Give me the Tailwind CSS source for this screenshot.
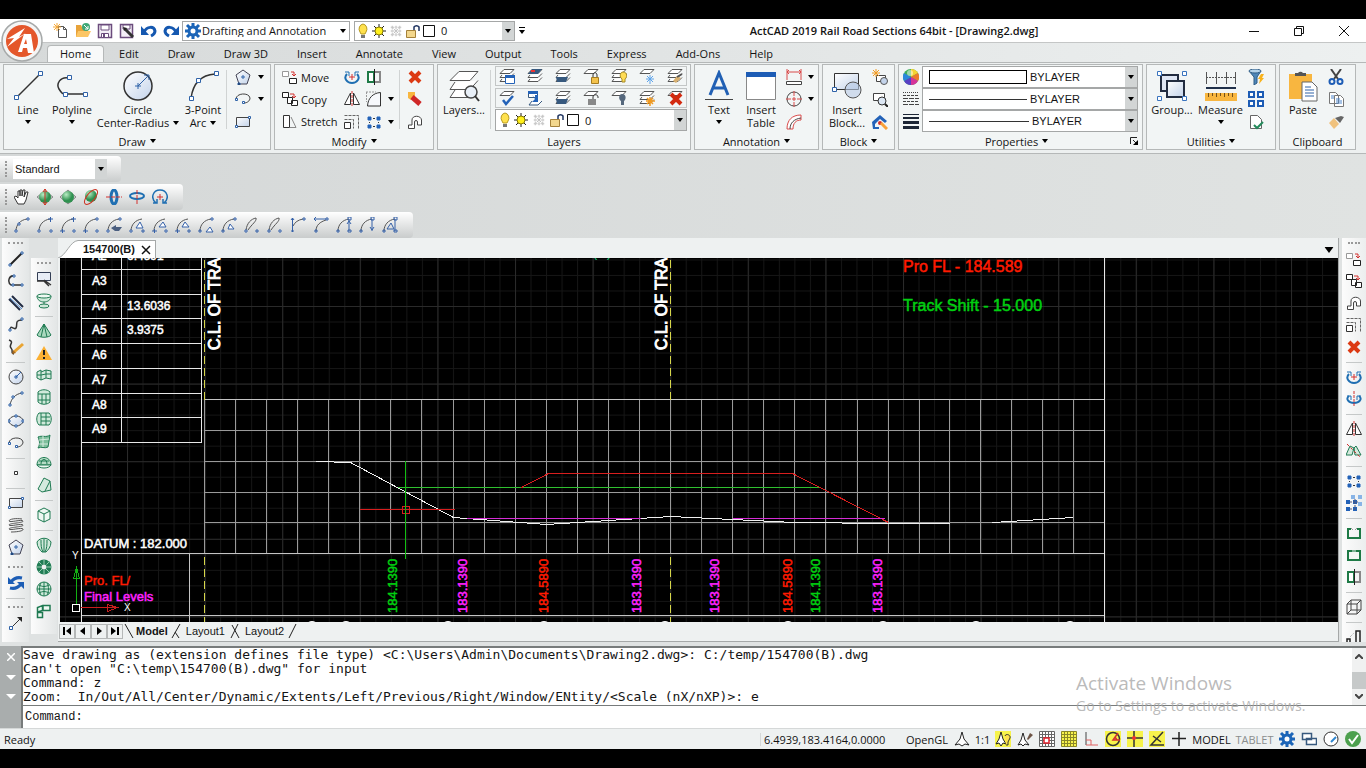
<!DOCTYPE html>
<html lang="en">
<head>
    <meta charset="UTF-8">
    <meta name="viewport" content="width=device-width, initial-scale=1.0">
    <title>ActCAD 2019 Rail Road Sections 64bit - [Drawing2.dwg]</title>
    <script src="https://cdn.jsdelivr.net/npm/@tailwindcss/browser@4"></script>
</head>
<body class="flex h-screen flex-col overflow-hidden bg-black py-[19px] font-['Open_Sans',sans-serif] text-[11px] leading-[13px] text-[#141414]">

    <!-- Icon sprite -->
    <svg class="absolute h-0 w-0" aria-hidden="true">
        <defs>
            <linearGradient id="soft" x2="1" y2="1"><stop stop-color="#fff"/><stop offset="1" stop-color="#c3d3ea"/></linearGradient>
            <radialGradient id="ball" cx=".35" cy=".3"><stop stop-color="#b9ecc3"/><stop offset="1" stop-color="#2f9150"/></radialGradient>
        </defs>
        <!-- title bar -->
        <symbol id="new" viewBox="0 0 16 16"><path d="M5.500 3.500h5l3 3v8h-8z" fill="#fff" stroke="#555"/><path d="M10.500 3.500v3h3" fill="none" stroke="#555"/><path d="M4 0v8M0 4h8M1 1l6 6M7 1L1 7" stroke="#f5a93b"/></symbol>
        <symbol id="open" viewBox="0 0 16 16"><path d="M1 2h5l1 2h6v10H1z" fill="#e8a33a"/><path d="M3 8h13l-3 6H1z" fill="#fcc665"/><circle cx="11" cy="4" r="4" fill="#3fa877"/><path d="M9 2l4 4M13 3v3h-3" stroke="#fff" fill="none"/></symbol>
        <symbol id="save" viewBox="0 0 16 16"><path d="M1.500 1.500h13v13h-13z" fill="#f3eef6" stroke="#6b4c7d" stroke-width="1.500"/><path d="M4 2h8v5H4z" fill="#fff" stroke="#6b4c7d"/><path d="M4.500 10.500h7v4h-7z" fill="#fff" stroke="#6b4c7d"/><path d="M6 11h2v3H6z" fill="#6b4c7d"/></symbol>
        <symbol id="saveas" viewBox="0 0 16 16"><path d="M1.500 1.500h12v13h-12z" fill="#f3eef6" stroke="#6b4c7d" stroke-width="1.500"/><path d="M4 2h7v4H4z" fill="#fff" stroke="#6b4c7d"/><path d="M6 6l8 8" stroke="#333" stroke-width="3"/><path d="M4 4l4 1-3 3z" fill="#222"/></symbol>
        <symbol id="undo" viewBox="0 0 16 16"><path d="M3 9C6 3 13 3 14 8c0 3-2 4-4 5" fill="none" stroke="#1558b0" stroke-width="3"/><path d="M0 3v9h8z" fill="#1558b0"/></symbol>
        <symbol id="redo" viewBox="0 0 16 16"><path d="M13 9C10 3 3 3 2 8c0 3 2 4 4 5" fill="none" stroke="#1558b0" stroke-width="3"/><path d="M16 3v9H8z" fill="#1558b0"/></symbol>
        <symbol id="gear" viewBox="0 0 16 16"><path d="M8 0v16M0 8h16M2 2l12 12M14 2L2 14" stroke="#1c65b8" stroke-width="3"/><circle cx="8" cy="8" r="4" fill="#fff" stroke="#1c65b8" stroke-width="3"/></symbol>
        <symbol id="bulb" viewBox="0 0 16 16"><path d="M8 1a4.500 5 0 0 1 3 8l-1 2H6L5 9a4.500 5 0 0 1 3-8z" fill="#ffe14d" stroke="#b79a20"/><path d="M6 12h4v3H6z" fill="#777"/></symbol>
        <symbol id="sun" viewBox="0 0 16 16"><path d="M8 1v14M1 8h14M3 3l10 10M13 3L3 13" stroke="#222"/><circle cx="8" cy="8" r="4" fill="#fff01c" stroke="#887a00"/></symbol>
        <symbol id="frost" viewBox="0 0 16 16"><path d="M3 1v14M8 1v14M13 1v14M1 3h14M1 8h14M1 13h14M3 3l10 10M13 3L3 13" stroke="#aaa" stroke-dasharray="2 1"/></symbol>
        <symbol id="unlock" viewBox="0 0 16 16"><path d="M9 7V4a3 3 0 0 1 5 0v4" fill="none" stroke="#1f3460" stroke-width="1.500"/><path d="M1.500 7.500h9v7h-9z" fill="#f3d78d" stroke="#a5813a"/></symbol>
        <symbol id="swatch" viewBox="0 0 16 16"><path d="M2.500 2.500h11v11h-11z" fill="#fff" stroke="#111"/></symbol>
        <symbol id="caret" viewBox="0 0 6 4"><path d="M0 0h6L3 4z"/></symbol>
        <!-- large ribbon icons -->
        <symbol id="L-line" viewBox="0 0 32 32"><path d="M4 28L28 4" stroke="#333" stroke-width="1.500"/><path d="M2.500 25.500h4v4h-4zM26.500 1.500h4v4h-4z" fill="#fff" stroke="#2f62a8"/></symbol>
        <symbol id="L-polyline" viewBox="0 0 32 32"><path d="M13 8C4 6 0 14 3 19s4 5 6 5h20" fill="none" stroke="#333" stroke-width="1.500"/><path d="M11.500 5.500h4v4h-4zM7.500 22.500h4v4h-4zM27.500 22.500h4v4h-4z" fill="#fff" stroke="#2f62a8"/></symbol>
        <symbol id="L-circle" viewBox="0 0 32 32"><circle cx="16" cy="16" r="14" fill="url(#soft)" stroke="#333" stroke-width="1.500"/><path d="M16 16l10-10M13 16h6M16 13v6M22 5h5v5" fill="none" stroke="#2f62a8"/></symbol>
        <symbol id="L-arc" viewBox="0 0 32 32"><path d="M4 28C6 14 14 5 28 4" fill="none" stroke="#333" stroke-width="1.500"/><path d="M2.500 26.500h4v4h-4zM9.500 8.500h4v4h-4zM27.500 1.500h4v4h-4z" fill="#fff" stroke="#2f62a8"/></symbol>
        <symbol id="L-layers" viewBox="0 0 32 32"><path d="M11 1.500h19l-8 9H2zM7 12l-5 7.500h20l8-9M7 20l-5 7.500h18l6-7" fill="#fff" stroke="#555"/><circle cx="23" cy="22" r="6" fill="#e9f0f8" stroke="#444" stroke-width="1.500"/><path d="M27 26l4 5" stroke="#333" stroke-width="2"/></symbol>
        <symbol id="L-text" viewBox="0 0 32 32"><path d="M7 25L16 3l9 22M10 18h12" fill="none" stroke="#2160b4" stroke-width="3"/><path d="M2 29.500h28" stroke="#444"/></symbol>
        <symbol id="L-table" viewBox="0 0 32 32"><path d="M1.500 2.500h29v27h-29z" fill="#fff" stroke="#888"/><path d="M1 2h30v5H1z" fill="#1d5cb5"/></symbol>
        <symbol id="L-block" viewBox="0 0 32 32"><path d="M3.500 3.500h24v16h-24z" fill="url(#soft)" stroke="#333"/><path d="M1.500 17.500h4v4h-4z" fill="#fff" stroke="#2f62a8"/><circle cx="22" cy="20" r="8" fill="#b9cce6" fill-opacity=".6" stroke="#555"/></symbol>
        <symbol id="L-group" viewBox="0 0 32 32"><path d="M5 5h17v16H5z" fill="#dfe6f4" stroke="#222c40" stroke-width="2"/><path d="M11 11h17v16H11z" fill="url(#soft)" stroke="#222c40" stroke-width="2"/><path d="M1.500 1.500h4v4h-4zM26.500 1.500h4v4h-4zM1.500 26.500h4v4h-4zM26.500 26.500h4v4h-4z" fill="#fff" stroke="#3973be"/></symbol>
        <symbol id="L-measure" viewBox="0 0 32 32"><path d="M1.500 2v12M11.500 2v12M21.500 2v12M30.500 2v12" stroke="#555"/><path d="M1 7.500h30" stroke="#555" stroke-dasharray="2 1"/><path d="M1 18h30" stroke="#20304a" stroke-width="2"/><path d="M0 23h32v8H0z" fill="#f8b640"/><path d="M3.500 23v4M7.500 23v3M11.500 23v4M15.500 23v3M19.500 23v4M23.500 23v3M27.500 23v4" stroke="#73501a"/></symbol>
        <symbol id="L-paste" viewBox="0 0 32 32"><path d="M2 4h23v25H2z" fill="#f8b640"/><path d="M8 6V3h3a3 3 0 0 1 5 0h3v3z" fill="#555"/><path d="M15 12h10l5 5v14H15z" fill="#fff" stroke="#666"/><path d="M18 17h6M18 20h9M18 23h9M18 26h9" stroke="#2f62a8"/></symbol>
        <!-- draw -->
        <symbol id="line" viewBox="0 0 16 16"><path d="M2 14L14 2" stroke="#222" stroke-width="2"/><path d="M1 13h2v2H1zM13 1h2v2h-2z" fill="#fff" stroke="#2f62a8"/></symbol>
        <symbol id="polyline" viewBox="0 0 16 16"><path d="M6 3C1 2-1 9 3 12h11" fill="none" stroke="#333" stroke-width="1.500"/><path d="M5 2h2v2H5zM4 11h2v2H4zM13 11h2v2h-2z" fill="#fff" stroke="#2f62a8"/></symbol>
        <symbol id="parallel" viewBox="0 0 16 16"><path d="M1 4l11 11M4 1l11 11" stroke="#222c44" stroke-width="2"/><path d="M2 3l12 11" stroke="#4d86cc"/></symbol>
        <symbol id="spline" viewBox="0 0 16 16"><path d="M2 14c0-8 4 0 6-3S6 3 14 3" fill="none" stroke="#333" stroke-width="1.500"/><path d="M1 12h2v2H1zM13 1h2v2h-2z" fill="#fff" stroke="#2f62a8"/></symbol>
        <symbol id="sketch" viewBox="0 0 16 16"><path d="M1 1c6 2-1 5 2 8s-1 5 3 6" fill="none" stroke="#333" stroke-width="1.500"/><path d="M6 13l9-8" stroke="#e9a534" stroke-width="3"/><path d="M4 15l1-4 3 3z" fill="#a96b20"/></symbol>
        <symbol id="circle" viewBox="0 0 16 16"><circle cx="8" cy="8" r="7" fill="url(#soft)" stroke="#444"/><path d="M8 8l5-5M6 8h4M8 6v4" stroke="#2f62a8"/></symbol>
        <symbol id="arc" viewBox="0 0 16 16"><path d="M2 14C3 8 7 3 14 2" fill="none" stroke="#444"/><path d="M1 13h2v2H1zM4 5h2v2H4zM13 1h2v2h-2z" fill="#fff" stroke="#2f62a8"/></symbol>
        <symbol id="ellipse" viewBox="0 0 16 16"><ellipse cx="8" cy="8" rx="7" ry="5" fill="url(#soft)" stroke="#444"/><path d="M0 7h2v2H0zM14 7h2v2h-2zM7 2h2v2H7zM7 12h2v2H7z" fill="#fff" stroke="#2f62a8"/></symbol>
        <symbol id="earc" viewBox="0 0 16 16"><path d="M1 8c0-6 13-7 14-1 0 3-3 5-6 5" fill="none" stroke="#444"/><path d="M.5 7.500h2v2h-2zM7.500 10.500h2v2h-2z" fill="#fff" stroke="#2f62a8"/></symbol>
        <symbol id="point" viewBox="0 0 16 16"><path d="M6.500 6.500h3v3h-3z" fill="#fff" stroke="#333"/></symbol>
        <symbol id="rect" viewBox="0 0 16 16"><path d="M1.500 3.500h13v9h-13z" fill="url(#soft)" stroke="#444"/><path d="M.5 11.500h2v2h-2zM13.500 2.500h2v2h-2z" fill="#fff" stroke="#2f62a8"/></symbol>
        <symbol id="hatch" viewBox="0 0 16 16"><path d="M14 2C8 1 1 2 1 4s13-2 14 0S1 6 1 8s13-2 14 0-14 2-14 4 13-2 14 0-6 3-12 3" fill="none" stroke="#555"/></symbol>
        <symbol id="polygon" viewBox="0 0 16 16"><path d="M8 1l7 5-3 9H4L1 6z" fill="url(#soft)" stroke="#445"/><path d="M6 8h4M8 6v4M3 14h2v2H3z" stroke="#2f62a8"/></symbol>
        <symbol id="refresh" viewBox="0 0 16 16"><path d="M14 3C10 2 6 3 3 7M2 13c4 1 8 0 11-4" fill="none" stroke="#1c5db5" stroke-width="3"/><path d="M0 2v7h7zM16 14V7H9z" fill="#1c5db5"/></symbol>
        <symbol id="ray" viewBox="0 0 16 16"><path d="M3 13L13 3" stroke="#333"/><path d="M9 2h5v5z" fill="#222"/><path d="M1.500 11.500h3v3h-3z" fill="#fff" stroke="#2f62a8"/></symbol>
        <!-- 3D surfaces -->
        <symbol id="redraw" viewBox="0 0 16 16"><path d="M1.500 1.500h13v8h-13z" fill="#e8edf6" stroke="#333e55"/><path d="M1 10h7l5 5M8 9l7 5" fill="none" stroke="#333" stroke-width="1.500"/></symbol>
        <symbol id="revolve" viewBox="0 0 16 16"><path d="M1 3c0 8 14 8 14 0M8 9v4" fill="#cfe9da" stroke="#1f7a52"/><ellipse cx="8" cy="3" rx="7" ry="2" fill="#eef8f2" stroke="#1f7a52"/><ellipse cx="8" cy="13" rx="5" ry="2" fill="#cfe9da" stroke="#1f7a52"/></symbol>
        <symbol id="cone" viewBox="0 0 16 16"><path d="M8 1L1 12c2 3 12 3 14 0z" fill="#a9d8be" stroke="#1f7a52"/><path d="M8 1L5 14M8 1l3 13" stroke="#1f7a52"/></symbol>
        <symbol id="warn" viewBox="0 0 16 16"><path d="M8 1l8 14H0z" fill="#fbb033"/><path d="M8 5v5M8 12v2" stroke="#222" stroke-width="2"/></symbol>
        <symbol id="mesh1" viewBox="0 0 16 16"><path d="M1 5l4-2v10l-4-2zM5 5l5-2 5 1v8l-5-1-5 2M1 8h4l5-1h5M10 3v8" fill="#d5eade" stroke="#1f7a52"/></symbol>
        <symbol id="mesh2" viewBox="0 0 16 16"><path d="M2 3c3-3 9-3 12 0v10c-3 3-9 3-12 0z" fill="#cfe9da" stroke="#1f7a52"/><path d="M2 5h12M2 11h12M6 5v10M10 5v10" stroke="#1f7a52"/></symbol>
        <symbol id="mesh3" viewBox="0 0 16 16"><path d="M3 2h10c3 3 3 9 0 12H3C0 11 0 5 3 2z" fill="#cfe9da" stroke="#1f7a52"/><path d="M5 2v12M10 2v12M5 6h9M5 10h9" stroke="#1f7a52"/></symbol>
        <symbol id="mesh4" viewBox="0 0 16 16"><path d="M2 4c4-2 8 1 12-2l-2 12c-4 2-6-1-10 1 2-4 2-6 0-11z" fill="#7fbf9d" stroke="#1f7a52"/><path d="M3 7l10-1M3 11h9M7 3v11" stroke="#d5eade"/></symbol>
        <symbol id="dome" viewBox="0 0 16 16"><path d="M1 10C1 0 15 0 15 10z" fill="#b5dcc6" stroke="#1f7a52"/><path d="M1 10c2 4 12 4 14 0z" fill="#eef8f2" stroke="#1f7a52"/><path d="M5 9c0-6 6-6 6 0M3 6h10" fill="none" stroke="#1f7a52"/></symbol>
        <symbol id="face" viewBox="0 0 16 16"><path d="M2 12L8 1l6 3 1 9-9 2z" fill="#d5eade" stroke="#1f7a52"/><path d="M14 4l-5 10" fill="none" stroke="#1f7a52"/></symbol>
        <symbol id="box" viewBox="0 0 16 16"><path d="M8 1l6 3v8l-6 3-6-3V4z" fill="#eef8f2" stroke="#1f7a52"/><path d="M2 4l6 3 6-3M8 7v8" fill="none" stroke="#1f7a52"/></symbol>
        <symbol id="shell" viewBox="0 0 16 16"><path d="M1 5c3-5 11-5 14 0 0 5-3 8-5 10H6C4 13 1 10 1 5z" fill="#cfe9da" stroke="#1f7a52"/><path d="M5 3c0 5 0 8 2 12M11 3c0 5 0 8-2 12M8 2v13" stroke="#1f7a52" fill="none"/></symbol>
        <symbol id="torus" viewBox="0 0 16 16"><circle cx="8" cy="8" r="5" fill="none" stroke="#217d55" stroke-width="5"/><path d="M8 0v16M0 8h16M2 2l12 12M14 2L2 14" stroke="#9ccfb4" stroke-dasharray="5 6"/></symbol>
        <symbol id="globe" viewBox="0 0 16 16"><circle cx="8" cy="8" r="7" fill="#cfe9da" stroke="#1f7a52"/><path d="M1 8h14M8 1v14M3 4c4 2 6 2 10 0M3 12c4-2 6-2 10 0M5 2c-2 4-2 8 0 12M11 2c2 4 2 8 0 12" fill="none" stroke="#1f7a52"/></symbol>
        <symbol id="tiles" viewBox="0 0 16 16"><path d="M1.500 9.500h5v5h-5zM1.500 9V4.500l5-2v5zM7 2.500h7v5H7z" fill="#eef8f2" stroke="#1f7a52" stroke-width="1.500"/></symbol>
        <!-- modify -->
        <symbol id="move" viewBox="0 0 16 16"><path d="M.5 2.500h6v5h-6z" fill="#fff" stroke="#999"/><path d="M7.500 9.500h7v5h-7z" fill="#fff" stroke="#222"/><path d="M9 3h3v4M10 5l2 2 2-2" fill="none" stroke="#d3302f"/></symbol>
        <symbol id="copy" viewBox="0 0 16 16"><path d="M.5 1.500h6v5h-6zM5.500 6.500h5v6h-5zM9.500 9.500h6v5h-6z" fill="#fff" stroke="#222"/><path d="M8 3h4v4M10 5l2 2 2-2" fill="none" stroke="#d3302f"/></symbol>
        <symbol id="stretch" viewBox="0 0 16 16"><path d="M1.500 2.500h6v12h-6z" fill="#fff" stroke="#333"/><path d="M9 4l5 10.500H8" fill="none" stroke="#888"/></symbol>
        <symbol id="rotate" viewBox="0 0 16 16"><path d="M3 5C-1 9 3 14 8 14s9-5 5-9" fill="none" stroke="#1f6fb2" stroke-width="2"/><path d="M1 3h4v4M15 3h-4v4" fill="none" stroke="#1f6fb2"/><path d="M5 8h6M8 5v6" stroke="#d3302f"/></symbol>
        <symbol id="rotate3" viewBox="0 0 16 16"><path d="M3 5c-4 3 0 7 5 7s9-4 5-7" fill="none" stroke="#1f6fb2" stroke-width="2"/><path d="M1 5h4v4M15 5h-4v4" fill="none" stroke="#1f6fb2"/><path d="M8 0v16" stroke="#d3302f" stroke-dasharray="3 1"/></symbol>
        <symbol id="trim" viewBox="0 0 16 16"><path d="M2 3h6v10H2z" fill="#fff" stroke="#1e7a46" stroke-width="2"/><path d="M9 3h5v10H9" fill="none" stroke="#888" stroke-width="2"/><path d="M8.500 0v16" stroke="#222"/></symbol>
        <symbol id="mirror" viewBox="0 0 16 16"><path d="M6.500 2v11.500h-6zM9.500 2v11.500h6z" fill="#fff" stroke="#333"/><path d="M8 0v16" stroke="#d3302f" stroke-dasharray="3 1"/></symbol>
        <symbol id="mirror3" viewBox="0 0 16 16"><path d="M4 3l-4 9h6l2-7zM10 3l5 9H9L8 5z" fill="#d5eade" stroke="#1f7a52"/><path d="M1 1l13 13" stroke="#d3302f" stroke-dasharray="3 2"/></symbol>
        <symbol id="fillet" viewBox="0 0 16 16"><path d="M1.500 15C2 7 7 2 14.500 1.500V15z" fill="#f7f9fc" stroke="#333"/><path d="M0 1h10M.5 1v10" stroke="#999" stroke-dasharray="2 1"/></symbol>
        <symbol id="scale" viewBox="0 0 16 16"><path d="M.5 8.500h6v6h-6z" fill="#fff" stroke="#333"/><path d="M.5 5.500h9v9M.5 1.500h14v13" fill="none" stroke="#666" stroke-dasharray="3 1"/></symbol>
        <symbol id="array" viewBox="0 0 16 16"><path d="M2 3h3v3H2zM11 3h3v3h-3zM2 11h3v3H2zM11 11h3v3h-3z" fill="#2362b8" stroke="#2362b8"/><path d="M7 4.500h2M7 12.500h2M3.500 8v1M12.500 8v1" stroke="#333"/></symbol>
        <symbol id="array3" viewBox="0 0 16 16"><path d="M5 0h4v4H5zM12 0h4v4h-4zM12 7h4v4h-4z" fill="#88b4e6"/><path d="M0 5h4v4H0zM7 5h4v4H7zM0 12h4v4H0zM7 12h4v4H7z" fill="#2362b8"/><path d="M4 7h8M4 14h3M9 4v12" stroke="#557" stroke-dasharray="2 1"/></symbol>
        <symbol id="erase" viewBox="0 0 16 16"><path d="M3 3l10 10M13 3L3 13" stroke="#dc3912" stroke-width="4"/></symbol>
        <symbol id="explode" viewBox="0 0 16 16"><path d="M1 1h7v4L4 9 1 7z" fill="#f8b640"/><path d="M5 6l8 7" stroke="#cf2727" stroke-width="5"/></symbol>
        <symbol id="offset" viewBox="0 0 16 16"><path d="M1.500 14.500h6V8a1.500 1.500 0 0 1 3 0v3h4V6C14 1 5 1 5 6v5H1.500z" fill="#fff" stroke="#444"/></symbol>
        <symbol id="break" viewBox="0 0 16 16"><path d="M5 4H2v9h12V4h-3" fill="none" stroke="#1e7a46" stroke-width="2"/><path d="M5 3l2 2M11 3L9 5" stroke="#999"/></symbol>
        <symbol id="join" viewBox="0 0 16 16"><path d="M2 4h12v9H2z" fill="#f3f8f5" stroke="#1e7a46" stroke-width="2"/><path d="M6 4h4" stroke="#7fb596" stroke-width="2"/></symbol>
        <symbol id="wire" viewBox="0 0 16 16"><path d="M1 5h10v10H1zM5 1h10v10H5zM1 5l4-4M11 5l4-4M11 15l4-4M1 15l4-4" fill="none" stroke="#444"/></symbol>
        <symbol id="align" viewBox="0 0 16 16"><path d="M1 14v-4h3v4M10 14V2h4v12" fill="none" stroke="#222" stroke-width="1.500"/><path d="M4 8l4-4" stroke="#999" stroke-dasharray="1 1"/></symbol>
        <!-- layer tools -->
        <symbol id="stack" viewBox="0 0 16 16"><path d="M5 1.500h10l-4 4H1zM3 7l-2 2.500h10l4-4M3 11l-2 2.500h10l4-4" fill="#fff" stroke="#555"/></symbol>
        <symbol id="ly1" viewBox="0 0 16 16"><use href="#stack"/><path d="M6.500 7.500h9v8h-9z" fill="#fff" stroke="#2362b8"/><path d="M6 7h10v3H6z" fill="#2362b8"/></symbol>
        <symbol id="ly2" viewBox="0 0 16 16"><use href="#stack"/><path d="M5 1h10l-4 5H1z" fill="#37597e"/><path d="M4 3h4" stroke="#e33" stroke-width="2"/></symbol>
        <symbol id="ly3" viewBox="0 0 16 16"><use href="#stack"/><path d="M1 9h12l-2 5H2z" fill="#37597e"/></symbol>
        <symbol id="ly4" viewBox="0 0 16 16"><path d="M5 1.500h10l-4 4H1z" fill="#fff" stroke="#555"/><path d="M10 9V7c0-3 4-3 4 0v2" fill="none" stroke="#333"/><path d="M8.500 9.500h7v6h-7z" fill="#f3c24c" stroke="#a57c20"/></symbol>
        <symbol id="ly5" viewBox="0 0 16 16"><use href="#stack"/><path d="M12 4c5 0 4 6 2 7v3h-3v-3C8 9 9 4 12 4z" fill="#ffdc55" stroke="#a58a26"/></symbol>
        <symbol id="ly6" viewBox="0 0 16 16"><path d="M5 1.500h10l-4 4H1z" fill="#fff" stroke="#555"/><path d="M11 7v9M7 11h8M8 8l6 6M14 8l-6 6" stroke="#5fa4ea"/></symbol>
        <symbol id="ly7" viewBox="0 0 16 16"><use href="#stack"/><path d="M6 13l4-5 4 2-5 5z" fill="#d8b070"/><path d="M10 9l5-3" stroke="#555" stroke-width="2"/></symbol>
        <symbol id="ly8" viewBox="0 0 16 16"><path d="M5 1.500h10l-4 4H1z" fill="#fff" stroke="#555"/><path d="M4 10l3 4 7-8" fill="none" stroke="#2362b8" stroke-width="2.500"/></symbol>
        <symbol id="ly9" viewBox="0 0 16 16"><path d="M1.500 1.500h9v6h-9zM5 11l-3 4h9l4-4" fill="#fff" stroke="#37597e"/><path d="M1 1h10v3H1zM5 5l3 3v-3h3v7H5l3-3z" fill="#2362b8"/></symbol>
        <symbol id="ly11" viewBox="0 0 16 16"><path d="M5 1.500h10l-4 4H1z" fill="#fff" stroke="#555"/><path d="M10 9V7c0-3 5-3 5 0v1" fill="none" stroke="#333"/><path d="M5 9h8v6H5z" fill="#888"/></symbol>
        <symbol id="ly12" viewBox="0 0 16 16"><path d="M5 1.500h10l-4 4H1z" fill="#fff" stroke="#555"/><path d="M11 4c5 0 4 6 2 7v4h-3v-4C7 9 8 4 11 4z" fill="#56687d"/></symbol>
        <symbol id="ly13" viewBox="0 0 16 16"><use href="#stack"/><path d="M11 7v9M7 11h9M8 8l6 6M14 8l-6 6" stroke="#f29a1f" stroke-width="1.500"/></symbol>
        <symbol id="ly14" viewBox="0 0 16 16"><path d="M5 1.500h10l-4 4H1z" fill="#fff" stroke="#555"/><path d="M4 4l10 10M14 4L4 14" stroke="#d32a10" stroke-width="4"/></symbol>
        <!-- annotation, block, properties, utilities, clipboard -->
        <symbol id="dim" viewBox="0 0 16 16"><path d="M1 0v11M15 0v11M1 3h14M3 1L1 3l2 2M13 1l2 2-2 2" fill="none" stroke="#d94a4a"/><path d="M.5 12.500h15v3H.5z" fill="#fff" stroke="#444"/></symbol>
        <symbol id="center" viewBox="0 0 16 16"><circle cx="8" cy="8" r="7" fill="none" stroke="#444"/><path d="M8 0v5M8 11v5M0 8h5M11 8h5M6 8h4M8 6v4" stroke="#d94a4a"/></symbol>
        <symbol id="dimarc" viewBox="0 0 16 16"><path d="M1 15C1 6 6 1 15 1v5c-5 0-8 3-8 9z" fill="#fff" stroke="#d94a4a"/><path d="M4 15C4 9 8 5 15 4" fill="none" stroke="#444"/></symbol>
        <symbol id="bnew" viewBox="0 0 16 16"><path d="M4.500 6.500h9v6h-9z" fill="#fff" stroke="#444"/><circle cx="12" cy="12" r="3.500" fill="#c3d3ea" stroke="#555"/><path d="M4 0v8M0 4h8M1 1l6 6M7 1L1 7" stroke="#f29a1f"/></symbol>
        <symbol id="bfind" viewBox="0 0 16 16"><path d="M1.500 2.500h11v7h-11z" fill="#fff" stroke="#444"/><circle cx="10" cy="10" r="4" fill="#dce7f4" stroke="#333"/><path d="M13 13l3 3" stroke="#222" stroke-width="2"/></symbol>
        <symbol id="bedit" viewBox="0 0 16 16"><path d="M0 8l8-7 7 6-2 2-5-4-5 5v3h4v2H1z" fill="#2362b8"/><circle cx="8" cy="9" r="2" fill="#d3302f"/><path d="M9 9l6 6" stroke="#f8a13a" stroke-width="3"/></symbol>
        <symbol id="wheel" viewBox="0 0 16 16"><circle cx="8" cy="8" r="8" fill="#3fae5a"/><path d="M8 8V0a8 8 0 0 1 7 4z" fill="#f6d331"/><path d="M8 8l7-4a8 8 0 0 1 0 8z" fill="#ee7a2b"/><path d="M8 8l7 4a8 8 0 0 1-7 4z" fill="#d6339a"/><path d="M8 8v8a8 8 0 0 1-7-4z" fill="#5840c4"/><path d="M8 8l-7 4a8 8 0 0 1 0-8z" fill="#2b87db"/><circle cx="7" cy="4" r="3" fill="#fff" fill-opacity=".5"/></symbol>
        <symbol id="ltype" viewBox="0 0 16 16"><path d="M0 1.500h16" stroke="#444" stroke-dasharray="1 1"/><path d="M0 4.500h16M0 10.500h16" stroke="#444" stroke-dasharray="3 1"/><path d="M0 7.500h16M0 13.500h16" stroke="#444" stroke-dasharray="5 1"/></symbol>
        <symbol id="lweight" viewBox="0 0 16 16"><path d="M0 .5h16" stroke="#1d2636"/><path d="M0 4h16" stroke="#1d2636" stroke-width="2"/><path d="M0 8.500h16M0 13.500h16" stroke="#1d2636" stroke-width="3"/></symbol>
        <symbol id="filter" viewBox="0 0 16 16"><path d="M1 2h12L9 8v6l-3 2V8z" fill="#4e86b8" stroke="#2f5c86"/><ellipse cx="7" cy="2" rx="6" ry="2" fill="#b5d3ea" stroke="#2f5c86"/><path d="M13 5l-3 5h2l-1 5 5-6h-2l2-4z" fill="#f8b21c"/></symbol>
        <symbol id="quad" viewBox="0 0 16 16"><path d="M1 1h5v5H1zM10 1h5v5h-5zM1 10h5v5H1zM10 10h5v5h-5z" fill="#fff" stroke="#1d5cb5" stroke-width="2"/></symbol>
        <symbol id="audit" viewBox="0 0 16 16"><path d="M2.500 1.500h7l4 4v9h-11z" fill="#fff" stroke="#666"/><path d="M6 11l3 3 6-6" fill="none" stroke="#238a5b" stroke-width="2"/></symbol>
        <symbol id="cut" viewBox="0 0 16 16"><path d="M3 0l7 10M13 0L6 10" stroke="#444" stroke-width="2"/><circle cx="4" cy="12.500" r="2.500" fill="none" stroke="#1d5cb5" stroke-width="2"/><circle cx="12" cy="12.500" r="2.500" fill="none" stroke="#1d5cb5" stroke-width="2"/></symbol>
        <symbol id="pages" viewBox="0 0 16 16"><path d="M1.500 1.500h6l3 3v8h-9zM6.500 4.500h6l3 3v8h-9z" fill="#fff" stroke="#777"/><path d="M3 5h3M3 7h3M8 8h4M8 10h6M8 12h6" stroke="#4d86cc"/></symbol>
        <symbol id="brush" viewBox="0 0 16 16"><path d="M1 9l5-5 5 6-5 5z" fill="#f0c27e"/><path d="M7 4l5 5 4-6-3-1z" fill="#666"/></symbol>
        <!-- orbit bar -->
        <symbol id="pan" viewBox="0 0 16 16"><path d="M4 15L0 8l2-1 2 2V2h2v5V1h2v6l1-6h2l-1 7 2-5h2l-2 8-2 4z" fill="#fff" stroke="#333"/></symbol>
        <symbol id="orb1" viewBox="0 0 16 16"><path d="M0 8l8-6 8 6-8 6z" fill="#ccc" stroke="#888"/><circle cx="8" cy="8" r="6" fill="url(#ball)"/><path d="M8 0v16M6 3l2-3 2 3M6 13l2 3 2-3" stroke="#cc3322" fill="none"/></symbol>
        <symbol id="orb2" viewBox="0 0 16 16"><path d="M0 8l8-7 8 7-8 7z" fill="#ccc" stroke="#888"/><circle cx="8" cy="8" r="6" fill="url(#ball)"/></symbol>
        <symbol id="orb3" viewBox="0 0 16 16"><circle cx="8" cy="7" r="6" fill="url(#ball)"/><ellipse cx="8" cy="8" rx="9" ry="4" transform="rotate(-50 8 8)" fill="none" stroke="#cc3322"/></symbol>
        <symbol id="orb4" viewBox="0 0 16 16"><ellipse cx="8" cy="8" rx="3" ry="7" fill="none" stroke="#1f6fb2" stroke-width="3"/><path d="M0 8h16" stroke="#d3302f" stroke-dasharray="4 1"/></symbol>
        <symbol id="orb5" viewBox="0 0 16 16"><ellipse cx="8" cy="7" rx="7" ry="3" fill="none" stroke="#1f6fb2" stroke-width="2"/><path d="M8 1v15" stroke="#d3302f" stroke-dasharray="4 1"/></symbol>
        <symbol id="orb6" viewBox="0 0 16 16"><path d="M4 14C-2 9 1 1 8 1s10 8 4 13M1 14h4v-4M15 14h-4v-4" fill="none" stroke="#1f6fb2" stroke-width="1.500"/><path d="M5 8h6M8 5v6" stroke="#d3302f"/></symbol>
        <!-- arc bar -->
        <symbol id="cv" viewBox="0 0 16 16"><path d="M2 14C2 8 6 3 13 2" fill="none" stroke="#555"/></symbol>
        <symbol id="a1" viewBox="0 0 16 16"><use href="#cv"/><path d="M1 13h2v2H1zM4 6h2v2H4zM13 1h2v2h-2z" fill="#fff" stroke="#3460a8"/></symbol>
        <symbol id="a2" viewBox="0 0 16 16"><use href="#cv"/><path d="M1 13h2v2H1zM13 13h2v2h-2zM11 2h5M13.500 0v5" fill="#fff" stroke="#3460a8"/></symbol>
        <symbol id="a3" viewBox="0 0 16 16"><use href="#cv"/><path d="M0 14h5M2.500 12v4M13 13h2v2h-2zM11 2h5M13.500 0v5" fill="#fff" stroke="#3460a8"/></symbol>
        <symbol id="a4" viewBox="0 0 16 16"><use href="#cv"/><path d="M0 14h5M2.500 12v4M13 13h2v2h-2zM13 1h2v2h-2z" fill="#fff" stroke="#3460a8"/></symbol>
        <symbol id="a5" viewBox="0 0 16 16"><use href="#cv"/><path d="M1 13h2v2H1zM13 1h2v2h-2z" fill="#fff" stroke="#3460a8"/><path d="M5 11l5-3v2h6l-3 4H9z" fill="#4b5f80"/></symbol>
        <symbol id="a6" viewBox="0 0 16 16"><use href="#cv"/><path d="M11 5l3 6H7zM1 13h2v2H1zM12 14h4M14 12v4" fill="#fff" stroke="#3460a8"/></symbol>
        <symbol id="a7" viewBox="0 0 16 16"><use href="#cv"/><path d="M11 5l3 5H7zM0 14h5M2.500 12v4M13 13h2v2h-2z" fill="#fff" stroke="#3460a8"/></symbol>
        <symbol id="a8" viewBox="0 0 16 16"><use href="#cv"/><path d="M10 5l4 5H7zM0 14h5M2.500 12v4M12 14h4M14 12v4" fill="#fff" stroke="#3460a8"/></symbol>
        <symbol id="a9" viewBox="0 0 16 16"><use href="#cv"/><path d="M12 10l3 5H8zM0 14h4M2 12v4M13 1h2v2h-2z" fill="#fff" stroke="#3460a8"/></symbol>
        <symbol id="a10" viewBox="0 0 16 16"><use href="#cv"/><path d="M9 7l4 5H7zM0 14h4M2 12v4M13 1h2v2h-2z" fill="#fff" stroke="#3460a8"/></symbol>
        <symbol id="a11" viewBox="0 0 16 16"><path d="M2 13C3 6 7 2 12 1c1 3-4 6-8 12" fill="none" stroke="#555"/><path d="M1 13h2v2H1zM11 14h4M13 12v4" fill="#fff" stroke="#3460a8"/></symbol>
        <symbol id="a12" viewBox="0 0 16 16"><path d="M2 13C3 6 7 2 12 1c1 3-4 6-8 12" fill="none" stroke="#555"/><path d="M0 14h4M2 12v4M12 13h2v2h-2z" fill="#fff" stroke="#3460a8"/></symbol>
        <symbol id="a13" viewBox="0 0 16 16"><path d="M3 9c2-4 5-6 10-7" fill="none" stroke="#555"/><path d="M2.500 1v14M1 3l1.500-2L4 3M1 14h3M13 1h2v2h-2z" fill="none" stroke="#3460a8"/></symbol>
        <symbol id="a14" viewBox="0 0 16 16"><path d="M3 14c0-6 4-9 10-11" fill="none" stroke="#555"/><path d="M1 2h12M3 0L1 2l2 2M13 1h2v2h-2zM1 14h4M3 12v4" fill="none" stroke="#3460a8"/></symbol>
        <symbol id="a15" viewBox="0 0 16 16"><use href="#cv"/><path d="M13 2v12M11 7l2-3 2 3M12 0h3v3h-3zM12 13h3v2h-3zM0 14h4M2 12v4" fill="none" stroke="#3460a8"/></symbol>
        <symbol id="a16" viewBox="0 0 16 16"><use href="#cv"/><path d="M13 2v12M11 10l2 3 2-3M12 0h3v3h-3zM0 14h4M2 12v4" fill="none" stroke="#3460a8"/></symbol>
        <symbol id="a17" viewBox="0 0 16 16"><use href="#cv"/><path d="M13 2v12M12 0h3v3h-3zM12 13h3v2h-3zM9 6l3 6H5zM0 14h4M2 12v4" fill="none" stroke="#3460a8"/></symbol>
        <!-- status bar -->
        <symbol id="ship" viewBox="0 0 16 16"><path d="M8 1l2 7 5 6-4-1-3 2-3-2-4 1 5-6z" fill="#fff" stroke="#222"/></symbol>
        <symbol id="ship2" viewBox="0 0 16 16"><path d="M0 0h16v16H0z" fill="#f7f34c"/><path d="M6 1l2 7 3 5-3-1-2 3-2-3-3 1 3-5z" fill="#fff" stroke="#222"/><path d="M10 5c1-3 6-1 5 2l-2 4v3h-2" fill="#ffe14d" stroke="#333"/></symbol>
        <symbol id="ship3" viewBox="0 0 16 16"><path d="M6 2l2 7 4 5-4-1-2 2-2-2-3 1 3-5z" fill="#fff" stroke="#222"/><path d="M10 8l3-6 3 2-5 5z" fill="#6d5446"/></symbol>
        <symbol id="snap" viewBox="0 0 16 16"><path d="M.5.5h15v15H.5zM.5 3.500h15M.5 6.500h15M.5 9.500h15M.5 12.500h15M3.500 0v16M6.500 0v16M9.500 0v16M12.500 0v16" fill="#fff" stroke="#666"/><path d="M5 7h5v5H5z" fill="#fff" stroke="#e0202b" stroke-width="1.500"/></symbol>
        <symbol id="grid" viewBox="0 0 16 16"><path d="M.5.5h15v15H.5zM.5 3.500h15M.5 6.500h15M.5 9.500h15M.5 12.500h15M3.500 0v16M6.500 0v16M9.500 0v16M12.500 0v16" fill="#f7f34c" stroke="#8a8728"/></symbol>
        <symbol id="ortho" viewBox="0 0 16 16"><path d="M3 1v13" stroke="#444"/><path d="M3 14h12M3 9h5v5" fill="none" stroke="#e06060"/></symbol>
        <symbol id="polar" viewBox="0 0 16 16"><path d="M0 0h16v16H0z" fill="#f7f34c"/><circle cx="8" cy="8" r="6.500" fill="none" stroke="#333" stroke-width="1.500"/><path d="M13 2L8 9h7M10 6l2 3" fill="none" stroke="#d3302f" stroke-width="1.500"/></symbol>
        <symbol id="osnap" viewBox="0 0 16 16"><path d="M0 0h16v16H0z" fill="#f7f34c"/><path d="M7 0v16M0 7h16" stroke="#333" stroke-width="1.500"/><circle cx="7" cy="7" r="2" fill="#e33"/></symbol>
        <symbol id="otrack" viewBox="0 0 16 16"><path d="M0 0h16v16H0z" fill="#f7f34c"/><path d="M14 1L2 14h13M4 5l8 6" fill="none" stroke="#333" stroke-width="1.500"/></symbol>
        <symbol id="cross" viewBox="0 0 16 16"><path d="M8 1v14M1 7.500h14" stroke="#222" stroke-width="1.500"/></symbol>
        <symbol id="wins" viewBox="0 0 16 16"><path d="M1.500 2.500h9v6h-9zM5.500 7.500h10v6h-10z" fill="#fff" stroke="#37597e" stroke-width="1.500"/></symbol>
        <symbol id="clock" viewBox="0 0 16 16"><circle cx="8" cy="8" r="7" fill="#fff" stroke="#333"/><path d="M8 11l5-5" stroke="#2f87d0" stroke-width="2"/></symbol>
        <symbol id="ok" viewBox="0 0 16 16"><circle cx="8" cy="8" r="8" fill="#4ca04e"/><path d="M4 8l3 4 6-8" fill="none" stroke="#fff" stroke-width="2"/></symbol>
    </svg>

    <!-- Title bar -->
    <header class="relative flex h-6 shrink-0 items-center border-b border-[#c4c6c6] bg-white pl-[50px]">
        <svg class="absolute top-0 left-0 z-10 h-11 w-11" viewBox="0 0 44 44" role="img" aria-label="ActCAD">
            <circle cx="22" cy="22" r="20" fill="#f4f5f5" stroke="#a6a9a9" stroke-width="1.500"/>
            <circle cx="22" cy="22" r="16" fill="#e4572b"/>
            <path d="M7 20L25 9l-6 9 7-4-19 14 7-9z" fill="#fff"/>
            <path d="M18 33l6-18h7l3 19h-6l-1-5h-4l-1 4zM24 25h3l-1-5z" fill="#fff" fill-rule="evenodd"/>
        </svg>
        <div class="flex" data-icons="new,open,save,saveas,undo,redo" data-kind="title"></div>
        <div class="relative flex h-5 w-[168px] items-center border border-[#a5a7a7] bg-white pl-[2px]">
            <svg class="h-4 w-4 shrink-0"><use href="#gear"/></svg>
            <select aria-label="Workspace" class="h-full w-full appearance-none bg-transparent pl-px"><option>Drafting and Annotation</option></select>
            <svg class="pointer-events-none absolute right-[3px] h-1 w-[6px]"><use href="#caret"/></svg>
        </div>
        <div class="relative ml-1 flex h-5 w-[161px] items-center border border-[#a5a7a7] bg-white">
            <svg class="h-4 w-4 shrink-0"><use href="#bulb"/></svg>
            <svg class="h-4 w-4 shrink-0"><use href="#sun"/></svg>
            <svg class="mx-px h-3 w-4 shrink-0"><use href="#frost"/></svg>
            <svg class="h-4 w-4 shrink-0"><use href="#unlock"/></svg>
            <svg class="h-4 w-4 shrink-0"><use href="#swatch"/></svg>
            <select aria-label="Current layer" class="h-full w-full appearance-none bg-transparent pl-1"><option>0</option></select>
            <span class="pointer-events-none absolute inset-y-0 right-0 flex w-3 items-center justify-center bg-[#d2d5d5]"><svg class="h-1 w-[6px]"><use href="#caret"/></svg></span>
        </div>
        <button class="ml-1 flex w-[6px] flex-col gap-[2px]" aria-label="Customize toolbar"><span class="h-px w-full bg-black"></span><svg class="h-1 w-[6px]"><use href="#caret"/></svg></button>
        <h1 class="flex-1 pl-8 text-center font-semibold">ActCAD 2019 Rail Road Sections 64bit - [Drawing2.dwg]</h1>
        <div class="flex">
            <button class="flex w-[45px] justify-center" aria-label="Minimize"><svg class="h-3 w-3" viewBox="0 0 12 12"><path d="M1 6.500h10" stroke="#111"/></svg></button>
            <button class="flex w-[45px] justify-center" aria-label="Restore"><svg class="h-3 w-3" viewBox="0 0 12 12"><path d="M1.500 3.500h7v7h-7zM3.500 3V1.500h7v7H9" fill="none" stroke="#111"/></svg></button>
            <button class="flex w-[45px] justify-center" aria-label="Close"><svg class="h-3 w-3" viewBox="0 0 12 12"><path d="M1 1l10 10M11 1L1 11" stroke="#111"/></svg></button>
        </div>
    </header>

    <!-- Ribbon tabs -->
    <nav class="flex h-[19px] shrink-0 items-end gap-px bg-linear-to-r from-[#d6d9d9] to-[#edf0f0] pl-[47px]">
        <a href="#home" class="rounded-t-sm border border-b-0 border-[#b5b8b8] bg-[#f8f9f9] px-3 pt-px pb-[2px]">Home</a>
        <a href="#edit" class="px-[14px] pb-[2px]">Edit</a>
        <a href="#draw" class="px-[14px] pb-[2px]">Draw</a>
        <a href="#draw3d" class="px-[14px] pb-[2px]">Draw 3D</a>
        <a href="#insert" class="px-[14px] pb-[2px]">Insert</a>
        <a href="#annotate" class="px-[14px] pb-[2px]">Annotate</a>
        <a href="#view" class="px-[14px] pb-[2px]">View</a>
        <a href="#output" class="px-[14px] pb-[2px]">Output</a>
        <a href="#tools" class="px-[14px] pb-[2px]">Tools</a>
        <a href="#express" class="px-[14px] pb-[2px]">Express</a>
        <a href="#addons" class="px-[14px] pb-[2px]">Add-Ons</a>
        <a href="#help" class="px-[14px] pb-[2px]">Help</a>
    </nav>

    <!-- Ribbon -->
    <div class="flex h-[92px] shrink-0 gap-[3px] border-y border-[#b5b8b8] bg-[#edf0f0] px-[3px] pt-px pb-[3px]">
        <section class="flex w-[268px] shrink-0 flex-col border border-[#b5b8b8] bg-[#f2f5f5] pt-px">
            <div class="flex flex-1 pl-1">
                <button class="flex w-10 flex-col items-center pt-1"><svg class="h-8 w-8"><use href="#L-line"/></svg><span class="mt-px">Line</span><svg class="mt-1 h-1 w-[6px]"><use href="#caret"/></svg></button>
                <button class="flex w-12 flex-col items-center pt-1"><svg class="h-8 w-8"><use href="#L-polyline"/></svg><span class="mt-px">Polyline</span><svg class="mt-1 h-1 w-[6px]"><use href="#caret"/></svg></button>
                <button class="flex w-[84px] flex-col items-center pt-1"><svg class="h-8 w-8"><use href="#L-circle"/></svg><span class="mt-px">Circle</span><span class="flex items-center gap-1">Center-Radius<svg class="h-1 w-[6px]"><use href="#caret"/></svg></span></button>
                <button class="flex w-[46px] flex-col items-center pt-1"><svg class="h-8 w-8"><use href="#L-arc"/></svg><span class="mt-px">3-Point</span><span class="flex items-center gap-1">Arc<svg class="h-1 w-[6px]"><use href="#caret"/></svg></span></button>
                <div class="my-1 w-px bg-[#d0d3d3]"></div>
                <div class="ml-1 grid grid-cols-[24px_12px]" data-icons="polygon,v,earc,v,rect" data-kind="ribbon"></div>
            </div>
            <h2 class="flex h-4 items-center justify-center gap-1">Draw<svg class="h-1 w-[6px]"><use href="#caret"/></svg></h2>
        </section>

        <section class="flex w-[160px] shrink-0 flex-col border border-[#b5b8b8] bg-[#f2f5f5] pt-px">
            <div class="flex flex-1 pl-[7px]">
                <div class="w-[59px]">
                    <button class="flex h-[22px] items-center gap-[3px]"><svg class="h-4 w-4"><use href="#move"/></svg>Move</button>
                    <button class="flex h-[22px] items-center gap-[3px]"><svg class="h-4 w-4"><use href="#copy"/></svg>Copy</button>
                    <button class="flex h-[22px] items-center gap-[3px]"><svg class="h-4 w-4"><use href="#stretch"/></svg>Stretch</button>
                </div>
                <div class="grid grid-cols-[22px_22px_12px]" data-icons="rotate,trim,-,mirror,fillet,v,scale,array,v" data-kind="ribbon"></div>
                <div class="my-1 mr-1 ml-[2px] w-px bg-[#d0d3d3]"></div>
                <div class="grid grid-cols-[22px]" data-icons="erase,explode,offset" data-kind="ribbon"></div>
            </div>
            <h2 class="flex h-4 items-center justify-center gap-1">Modify<svg class="h-1 w-[6px]"><use href="#caret"/></svg></h2>
        </section>

        <section class="flex w-[254px] shrink-0 flex-col border border-[#b5b8b8] bg-[#f2f5f5] pt-px">
            <div class="flex flex-1">
                <button class="flex w-[52px] flex-col items-center pt-1"><svg class="h-8 w-8"><use href="#L-layers"/></svg><span class="mt-px">Layers...</span></button>
                <div class="my-1 w-px bg-[#d0d3d3]"></div>
                <div class="ml-1 w-[192px]">
                    <div class="flex h-[20px] items-center justify-between border border-[#c3c6c6] px-px" data-icons="ly1,ly2,ly3,ly4,ly5,ly6,ly7" data-kind="layer"></div>
                    <div class="mt-[2px] flex h-[20px] items-center justify-between border border-[#c3c6c6] px-px" data-icons="ly8,ly9,ly3,ly11,ly12,ly13,ly14" data-kind="layer"></div>
                    <div class="relative mt-px flex h-[22px] items-center border border-[#a5a7a7] bg-white pl-px">
                        <svg class="h-4 w-4 shrink-0"><use href="#bulb"/></svg>
                        <svg class="h-4 w-4 shrink-0"><use href="#sun"/></svg>
                        <svg class="mx-[2px] h-3 w-4 shrink-0"><use href="#frost"/></svg>
                        <svg class="h-4 w-4 shrink-0"><use href="#unlock"/></svg>
                        <svg class="h-4 w-4 shrink-0"><use href="#swatch"/></svg>
                        <select aria-label="Layer" class="h-full w-full appearance-none bg-transparent pl-1"><option>0</option></select>
                        <span class="pointer-events-none absolute inset-y-0 right-0 flex w-3 items-center justify-center bg-[#d2d5d5]"><svg class="h-1 w-[6px]"><use href="#caret"/></svg></span>
                    </div>
                </div>
            </div>
            <h2 class="flex h-4 items-center justify-center">Layers</h2>
        </section>

        <section class="flex w-[125px] shrink-0 flex-col border border-[#b5b8b8] bg-[#f2f5f5] pt-px">
            <div class="flex flex-1 pl-1">
                <button class="flex w-10 flex-col items-center pt-1"><svg class="h-8 w-8"><use href="#L-text"/></svg><span class="mt-px">Text</span><svg class="mt-1 h-1 w-[6px]"><use href="#caret"/></svg></button>
                <button class="flex w-11 flex-col items-center pt-1"><svg class="h-8 w-8"><use href="#L-table"/></svg><span class="mt-px">Insert<br>Table</span></button>
                <div class="grid grid-cols-[22px_12px]" data-icons="dim,v,center,v,dimarc" data-kind="ribbon"></div>
            </div>
            <h2 class="flex h-4 items-center justify-center gap-1">Annotation<svg class="h-1 w-[6px]"><use href="#caret"/></svg></h2>
        </section>

        <section class="flex w-[73px] shrink-0 flex-col border border-[#b5b8b8] bg-[#f2f5f5] pt-px">
            <div class="flex flex-1">
                <button class="flex w-12 flex-col items-center pt-1"><svg class="h-8 w-8"><use href="#L-block"/></svg><span class="mt-px">Insert<br>Block...</span></button>
                <div class="grid grid-cols-[18px]" data-icons="bnew,bfind,bedit" data-kind="ribbon"></div>
            </div>
            <h2 class="flex h-4 items-center justify-center gap-1">Block<svg class="h-1 w-[6px]"><use href="#caret"/></svg></h2>
        </section>

        <section class="flex w-[245px] shrink-0 flex-col border border-[#b5b8b8] bg-[#f2f5f5] pt-px">
            <div class="flex flex-1">
                <div class="grid grid-cols-[23px]" data-icons="wheel,ltype,lweight" data-kind="ribbon"></div>
                <div class="flex-1 pr-1 font-['Liberation_Sans',sans-serif]">
                    <label class="relative flex h-[22px] items-center border border-[#a5a7a7] bg-white pl-[6px]">
                        <span class="h-[14px] w-[98px] shrink-0 border border-black"></span>
                        <select aria-label="Colour" class="h-full w-full appearance-none bg-transparent pl-[3px]"><option>BYLAYER</option></select>
                        <span class="pointer-events-none absolute inset-y-0 right-0 flex w-3 items-center justify-center bg-[#d2d5d5]"><svg class="h-1 w-[6px]"><use href="#caret"/></svg></span>
                    </label>
                    <label class="relative flex h-[22px] items-center border border-[#a5a7a7] bg-white pl-[6px]">
                        <span class="h-px w-[98px] shrink-0 bg-[#333]"></span>
                        <select aria-label="Linetype" class="h-full w-full appearance-none bg-transparent pl-[3px]"><option>BYLAYER</option></select>
                        <span class="pointer-events-none absolute inset-y-0 right-0 flex w-3 items-center justify-center bg-[#d2d5d5]"><svg class="h-1 w-[6px]"><use href="#caret"/></svg></span>
                    </label>
                    <label class="relative flex h-[22px] items-center border border-[#a5a7a7] bg-white pl-[6px]">
                        <span class="h-px w-[100px] shrink-0 bg-[#333]"></span>
                        <select aria-label="Lineweight" class="h-full w-full appearance-none bg-transparent pl-[3px]"><option>BYLAYER</option></select>
                        <span class="pointer-events-none absolute inset-y-0 right-0 flex w-3 items-center justify-center bg-[#d2d5d5]"><svg class="h-1 w-[6px]"><use href="#caret"/></svg></span>
                    </label>
                </div>
            </div>
            <div class="relative flex h-4 items-center justify-center">
                <h2 class="flex items-center gap-1 pr-2">Properties<svg class="h-1 w-[6px]"><use href="#caret"/></svg></h2>
                <button class="absolute right-1" aria-label="Properties palette"><svg class="h-2 w-2" viewBox="0 0 8 8"><path d="M.5 7V.5H7M3 3l4 4" fill="none" stroke="#222"/><path d="M8 3v5H3z"/></svg></button>
            </div>
        </section>

        <section class="flex w-[130px] shrink-0 flex-col border border-[#b5b8b8] bg-[#f2f5f5] pt-px">
            <div class="flex flex-1">
                <button class="flex w-[50px] flex-col items-center pt-1"><svg class="h-8 w-8"><use href="#L-group"/></svg><span class="mt-px">Group...</span></button>
                <button class="flex w-[47px] flex-col items-center pt-1"><svg class="h-8 w-8"><use href="#L-measure"/></svg><span class="mt-px">Measure</span><svg class="mt-1 h-1 w-[6px]"><use href="#caret"/></svg></button>
                <div class="grid grid-cols-[24px]" data-icons="filter,quad,audit" data-kind="ribbon"></div>
            </div>
            <h2 class="flex h-4 items-center justify-center gap-1">Utilities<svg class="h-1 w-[6px]"><use href="#caret"/></svg></h2>
        </section>

        <section class="flex w-[77px] shrink-0 flex-col border border-[#b5b8b8] bg-[#f2f5f5] pt-px">
            <div class="flex flex-1">
                <button class="flex w-[46px] flex-col items-center pt-1"><svg class="h-8 w-8"><use href="#L-paste"/></svg><span class="mt-px">Paste</span></button>
                <div class="grid grid-cols-[20px]" data-icons="cut,pages,brush" data-kind="ribbon"></div>
            </div>
            <h2 class="flex h-4 items-center justify-center">Clipboard</h2>
        </section>
    </div>

    <!-- Docked toolbars -->
    <div class="flex h-[84px] shrink-0 flex-col items-start gap-[2px] bg-linear-to-r from-[#d5d8d8] to-[#e0e3e2] pt-[2px]">
        <div class="flex h-[26px] w-[121px] items-center rounded-r bg-linear-to-b from-white to-[#c9cccc] pl-[5px] font-['Liberation_Sans',sans-serif]">
            <span class="h-4 border-l-2 border-dotted border-[#999]"></span>
            <div class="relative ml-[6px] flex h-5 w-[94px] items-center bg-white">
                <select aria-label="Text style" class="h-full w-full appearance-none bg-transparent pl-[2px]"><option>Standard</option></select>
                <span class="pointer-events-none absolute inset-y-0 right-0 flex w-3 items-center justify-center bg-[#d2d5d5]"><svg class="h-1 w-[6px]"><use href="#caret"/></svg></span>
            </div>
        </div>
        <div class="flex h-[26px] w-[183px] items-center rounded-r bg-linear-to-b from-white to-[#c9cccc] pl-[5px]">
            <span class="mr-[3px] h-4 border-l-2 border-dotted border-[#999]"></span>
            <div class="flex" data-icons="pan,orb1,orb2,orb3,orb4,orb5,orb6" data-kind="bar"></div>
        </div>
        <div class="flex h-[26px] w-[413px] items-center rounded-r bg-linear-to-b from-white to-[#c9cccc] pl-[5px]">
            <span class="mr-[3px] h-4 border-l-2 border-dotted border-[#999]"></span>
            <div class="flex" data-icons="a1,a2,a3,a4,a5,a6,a7,a8,a9,a10,a11,a12,a13,a14,a15,a16,a17" data-kind="bar"></div>
        </div>
    </div>

    <main class="flex min-h-0 flex-1 bg-[#dfe2e2]">
        <!-- Draw toolbar -->
        <aside class="ml-[2px] w-[27px] shrink-0 overflow-hidden bg-linear-to-r from-[#fcfcfc] to-[#e3e6e6]" data-icons=".,line,polyline,parallel,spline,sketch,|,circle,arc,ellipse,earc,|,point,|,rect,hatch,polygon,..,refresh,|,.,ray" data-kind="side"></aside>
        <!-- Surfaces toolbar -->
        <aside class="mt-5 mb-2 ml-[2px] w-[26px] shrink-0 overflow-hidden bg-linear-to-r from-[#fcfcfc] to-[#e3e6e6]" data-icons=".,redraw,revolve,|,cone,warn,mesh1,mesh2,mesh3,mesh4,dome,face,|,box,|,shell,torus,globe,tiles" data-kind="side"></aside>

        <!-- Document -->
        <div class="ml-px flex min-w-0 flex-1 flex-col border-r border-b border-[#a5a8a8] bg-[#eef1f1] pb-px">
            <div class="flex h-5 shrink-0 items-end">
                <svg class="h-[18px] w-5" viewBox="0 0 20 18"><path d="M0 18C8 16 12 1 20 1v17z" fill="#fff"/><path d="M0 18C8 16 12 1 20 .5" fill="none" stroke="#a5a8a8"/></svg>
                <div class="flex h-[18px] items-center gap-[6px] border-t border-r border-[#a5a8a8] bg-white pr-1 pl-[5px] font-['Liberation_Sans',sans-serif] font-bold">154700(B)
                    <button class="flex" aria-label="Close document"><svg class="h-[10px] w-[10px]" viewBox="0 0 10 10"><path d="M1 1l8 8M9 1L1 9" stroke="#111" stroke-width="1.500"/></svg></button>
                </div>
                <button class="mr-1 mb-[5px] ml-auto" aria-label="Document list"><svg class="h-[6px] w-[10px]" viewBox="0 0 6 4"><use href="#caret"/></svg></button>
            </div>

            <div class="ml-[2px] min-h-0 flex-1 bg-black">
                <svg class="h-full w-full font-['Liberation_Sans',sans-serif]" role="img" aria-label="Cross section drawing">
                    <defs>
                        <pattern id="minor" x="49.400" y="306" width="15.520" height="15.520" patternUnits="userSpaceOnUse"><path d="M.5 0v15.520M0 .5h15.520" stroke="#161616"/></pattern>
                        <pattern id="major" x="49.400" y="306" width="77.600" height="77.600" patternUnits="userSpaceOnUse"><path d="M.5 0v77.600M0 .5h77.600" stroke="#2a2a2a"/></pattern>
                    </defs>
                    <g transform="translate(-60 -258)">
                        <rect x="60" y="258" width="3000" height="2000" fill="url(#minor)"/>
                        <rect x="60" y="258" width="3000" height="2000" fill="url(#major)"/>
                    </g>
                    <g transform="translate(-59.500 -257.500)" fill="none" shape-rendering="crispEdges">
                        <!-- section grid -->
                        <path stroke="#9a9a9a" d="M204 430H1104M204 461H1104M204 492H1104M204 522H1104M204 399V553M235 399V553M266 399V553M297 399V553M328 399V553M359 399V553M390 399V553M421 399V553M453 399V553M484 399V553M515 399V553M546 399V553M577 399V553M608 399V553M639 399V553M670 399V553M701 399V553M732 399V553M763 399V553M794 399V553M825 399V553M857 399V553M888 399V553M919 399V553M949 399V553M980 399V553M1011 399V553M1042 399V553M1073 399V553"/>
                        <path stroke="#c4c4c4" d="M204 399H1104M81 553H1104M81 615H1104M189 553V640"/>
                        <path stroke="#e8e8e8" d="M81 250V640M1104 250V640"/>
                        <!-- area table -->
                        <path stroke="#e8e8e8" d="M121 250V442M201 250V442M81 269H201M81 294H201M81 318H201M81 343H201M81 368H201M81 393H201M81 417H201M81 442H201"/>
                        <path stroke="#d6d64a" stroke-dasharray="8 4" d="M204 259V399M204 556V640M670 259V399M670 556V640"/>
                        <!-- levels -->
                        <path stroke="#2fc02f" d="M397 487H819"/>
                        <path stroke="#d81e1e" d="M521 487L548 473H792L888 522"/>
                        <path stroke="#f0f0f0" d="M316 461L350 462L453 517L546 524L670 516L794 522L888 523H949M992 522L1073 517"/>
                        <path stroke="#d52cd5" d="M466 518H640M732 518H884"/>
                        <!-- crosshair -->
                        <path stroke="#d81e1e" d="M359 509H454M402 506h7v7h-7z"/>
                        <path stroke="#12c012" d="M405 460V558"/>
                        <!-- UCS -->
                        <path stroke="#12b012" d="M76 603V568M73 578L76 567L79 578z"/>
                        <path stroke="#c81e1e" d="M80 607H117M107 604L117 607L107 611z"/>
                        <path stroke="#fff" d="M72 604h7v7h-7z"/>
                    </g>
                    <g transform="translate(-60 -258)" font-size="13" stroke-width=".5">
                        <g fill="#fff" font-size="10"><text x="72" y="559">Y</text><text x="124" y="611">X</text></g>
                        <g fill="#fff" stroke="#fff" font-size="12">
                            <text x="92" y="260">A2</text><text x="127" y="260">6.4591</text>
                            <text x="92" y="285">A3</text>
                            <text x="92" y="310">A4</text><text x="127" y="310">13.6036</text>
                            <text x="92" y="334">A5</text><text x="127" y="334">3.9375</text>
                            <text x="92" y="359">A6</text>
                            <text x="92" y="384">A7</text>
                            <text x="92" y="409">A8</text>
                            <text x="92" y="433">A9</text>
                        </g>
                        <text x="84" y="548" fill="#fff" stroke="#fff">DATUM : 182.000</text>
                        <text x="84" y="585" fill="#ff1a00" stroke="#ff1a00">Pro. FL/</text>
                        <text x="84" y="601" fill="#ff22ff" stroke="#ff22ff">Final Levels</text>
                        <g font-size="16">
                            <text x="903" y="272" fill="#ff1a00" stroke="#ff1a00">Pro FL - 184.589</text>
                            <text x="903" y="311" fill="#00d010" stroke="#00d010">Track Shift - 15.000</text>
                            <text transform="translate(220 350) rotate(-90)" fill="#fff" stroke="#fff" stroke-width="1">C.L. OF TRACK</text>
                            <text transform="translate(667 350) rotate(-90)" fill="#fff" stroke="#fff" stroke-width="1">C.L. OF TRACK</text>
                            <text x="592" y="257" fill="#18b06a">(+)</text>
                        </g>
                        <text transform="translate(397 613) rotate(-90)" fill="#00d010" stroke="#00d010">184.1390</text>
                        <text transform="translate(467 613) rotate(-90)" fill="#ff22ff" stroke="#ff22ff">183.1390</text>
                        <text transform="translate(548 613) rotate(-90)" fill="#ff1a00" stroke="#ff1a00">184.5890</text>
                        <text transform="translate(641 613) rotate(-90)" fill="#ff22ff" stroke="#ff22ff">183.1390</text>
                        <text transform="translate(719 613) rotate(-90)" fill="#ff22ff" stroke="#ff22ff">183.1390</text>
                        <text transform="translate(792 613) rotate(-90)" fill="#ff1a00" stroke="#ff1a00">184.5890</text>
                        <text transform="translate(820 613) rotate(-90)" fill="#00d010" stroke="#00d010">184.1390</text>
                        <text transform="translate(882 613) rotate(-90)" fill="#ff22ff" stroke="#ff22ff">183.1390</text>
                        <path fill="#fff" d="M307 623q5-4 10 0zM341 623q5-4 10 0zM443 623q5-4 10 0zM539 623q5-4 10 0zM660 623q5-4 10 0zM783 623q5-4 10 0zM878 623q5-4 10 0zM971 623q5-4 10 0zM1065 623q5-4 10 0z"/>
                    </g>
                </svg>
            </div>

            <!-- Sheet tabs -->
            <div class="ml-px flex h-[18px] shrink-0 items-center font-['Liberation_Sans',sans-serif]">
                <button class="flex h-[15px] w-4 items-center justify-center border border-[#b5b8b8]" aria-label="First"><svg class="h-2 w-2" viewBox="0 0 8 8"><path d="M0 0h2v8H0zM8 0v8L3 4z"/></svg></button>
                <button class="flex h-[15px] w-4 items-center justify-center border border-[#b5b8b8]" aria-label="Previous"><svg class="h-2 w-2" viewBox="0 0 8 8"><path d="M6 0v8L1 4z"/></svg></button>
                <button class="flex h-[15px] w-4 items-center justify-center border border-[#b5b8b8]" aria-label="Next"><svg class="h-2 w-2" viewBox="0 0 8 8"><path d="M2 0v8l5-4z"/></svg></button>
                <button class="flex h-[15px] w-4 items-center justify-center border border-[#b5b8b8]" aria-label="Last"><svg class="h-2 w-2" viewBox="0 0 8 8"><path d="M6 0h2v8H6zM0 0v8l5-4z"/></svg></button>
                <svg class="h-4 w-[13px]" viewBox="0 0 13 16"><path d="M2 1l8 14" stroke="#222"/></svg>
                <a href="#model" class="font-bold">Model</a>
                <svg class="mx-[3px] h-4 w-3" viewBox="0 0 12 16"><path d="M9 1L1 15M4 9l4 6" stroke="#222"/></svg>
                <a href="#layout1">Layout1</a>
                <svg class="mx-[3px] h-4 w-[14px]" viewBox="0 0 14 16"><path d="M4 2l7 13M10 1L3 15" stroke="#222"/></svg>
                <a href="#layout2">Layout2</a>
                <svg class="mx-[3px] h-4 w-3" viewBox="0 0 12 16"><path d="M9 1L2 15" stroke="#222"/></svg>
            </div>
        </div>

        <!-- Modify toolbar -->
        <aside class="ml-[3px] w-[24px] shrink-0 overflow-hidden bg-linear-to-r from-[#fcfcfc] to-[#eceeee]" data-icons=".,move,copy,offset,scale,erase,|,rotate,rotate3,|,mirror,mirror3,|,array,array3,|,break,join,trim,|,wire,|,align" data-kind="side"></aside>
    </main>

    <!-- Command window -->
    <section class="relative flex h-[87px] shrink-0 border-b border-[#d5d8d8] bg-[#dfe2e2] pt-1" aria-label="Command window">
        <div class="flex w-[21px] shrink-0 flex-col items-center gap-[14px] bg-[#a9adad] pt-[7px]">
            <svg class="h-2 w-2" viewBox="0 0 8 8"><path d="M0 0l8 8M8 0L0 8" stroke="#fff" stroke-width="1.500"/></svg>
            <svg class="h-[5px] w-[10px]" viewBox="0 0 10 5"><path d="M0 0h10L5 5z" fill="#fff"/></svg>
            <svg class="h-[5px] w-[10px]" viewBox="0 0 10 5"><path d="M0 0h10L5 5z" fill="#fff"/></svg>
        </div>
        <div class="flex min-w-0 flex-1 flex-col border-t-2 border-l-2 border-[#777b7b] bg-white">
            <div class="flex h-[58px] border-b border-[#777b7b]">
                <pre class="flex-1 overflow-hidden font-['DejaVu_Sans_Mono',monospace] text-[13px] leading-[14px]">Save drawing as (extension defines file type) &lt;C:\Users\Admin\Documents\Drawing2.dwg&gt;: C:/temp/154700(B).dwg
Can't open "C:\temp\154700(B).dwg" for input
Command: z
Zoom:  In/Out/All/Center/Dynamic/Extents/Left/Previous/Right/Window/ENtity/&lt;Scale (nX/nXP)&gt;: e</pre>
                <div class="flex w-[14px] flex-col items-center justify-between bg-[#f0f1f1] py-[6px]">
                    <svg class="h-[5px] w-2" viewBox="0 0 8 5"><path d="M0 5l4-4 4 4" fill="none" stroke="#444" stroke-width="2"/></svg>
                    <span class="mt-2 h-[17px] w-full bg-[#c6c9c9]"></span>
                    <svg class="h-[5px] w-2" viewBox="0 0 8 5"><path d="M0 0l4 4 4-4" fill="none" stroke="#444" stroke-width="2"/></svg>
                </div>
            </div>
            <label class="flex flex-1 items-center pl-[2px] font-['Liberation_Mono',monospace] text-[12px]">Command:<input type="text" class="ml-1 min-w-0 flex-1 outline-none"></label>
        </div>
        <div class="pointer-events-none absolute top-[29px] right-[50px] w-[240px] text-[#a8a8a8]/80">
            <p class="text-[19px] leading-[24px]">Activate Windows</p>
            <p class="text-[14px] leading-[22px]">Go to Settings to activate Windows.</p>
        </div>
    </section>

    <!-- Status bar -->
    <footer class="flex min-h-[20px] shrink-0 items-center bg-[#eef1f1] pl-1">
        <span class="flex-1">Ready</span>
        <span class="w-[125px] border-l border-[#d5d8d8] pl-[3px]">6.4939,183.4164,0.0000</span>
        <span class="ml-[21px] w-[45px]">OpenGL</span>
        <div class="flex" data-icons="ship" data-kind="status"></div>
        <button class="w-[19px]">1:1</button>
        <div class="flex" data-icons="ship2,ship3,snap,grid,ortho,polar,osnap,otrack,cross" data-kind="status"></div>
        <button class="w-[43px]">MODEL</button>
        <button class="w-[43px] text-[#8a8d8d]">TABLET</button>
        <div class="flex" data-icons="gear,wins,clock,ok" data-kind="status"></div>
        <span class="w-[2px]"></span>
    </footer>

<script>
    const buttonClass = {
        title: 'flex h-5 w-[22px] items-center justify-center',
        ribbon: 'flex h-[22px] w-full items-center justify-center',
        layer: 'flex h-[18px] w-5 items-center justify-center',
        bar: 'flex h-6 w-[23px] items-center justify-center',
        side: 'flex h-[22px] w-full items-center justify-center',
        status: 'flex h-[18px] w-[22px] items-center justify-center',
    };

    // | is a separator, . and .. are grips, v is a drop-down arrow, - is an empty cell
    function renderIcon(name, kind) {
        if (name === '|') return '<div class="mx-1 flex h-2 items-center"><span class="h-px w-full bg-[#c5c8c8]"></span></div>';
        if (name === '.') return '<div class="mx-[6px] h-[10px] pt-1"><span class="block border-t-2 border-dotted border-[#999]"></span></div>';
        if (name === '..') return '<div class="mx-[6px] h-[14px] pt-2"><span class="block border-t-2 border-dotted border-[#999]"></span></div>';
        if (name === '-') return '<span></span>';
        if (name === 'v') return '<button class="flex items-center justify-center" aria-label="More"><svg class="h-1 w-[6px]"><use href="#caret"/></svg></button>';
        return `<button class="${buttonClass[kind]}" aria-label="${name}"><svg class="h-4 w-4"><use href="#${name}"/></svg></button>`;
    }

    document.querySelectorAll('[data-icons]').forEach((bar) => {
        bar.innerHTML = bar.dataset.icons.split(',').map((name) => renderIcon(name, bar.dataset.kind)).join('');
    });
</script>

</body>
</html>
